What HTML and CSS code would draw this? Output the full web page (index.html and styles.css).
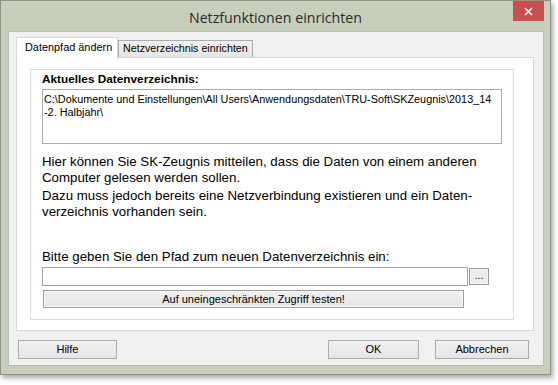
FILE: index.html
```html
<!DOCTYPE html>
<html>
<head>
<meta charset="utf-8">
<link rel="stylesheet" href="styles.css">
</head>
<body>
<div class="window">
  <div class="titlebar">
    <span class="title">Netzfunktionen einrichten</span>
    <div class="close"><svg width="9" height="9" viewBox="0 0 9 9"><path d="M1 1L8 8M8 1L1 8" stroke="#fff" stroke-width="1.6"/></svg></div>
  </div>
  <div class="client">
    <div class="tabs">
      <div class="tab active">Datenpfad ändern</div>
      <div class="tab">Netzverzeichnis einrichten</div>
    </div>
    <div class="page">
      <div class="group">
        <div class="label">Aktuelles Datenverzeichnis:</div>
        <div class="pathbox">C:\Dokumente und Einstellungen\All Users\Anwendungsdaten\TRU-Soft\SKZeugnis\2013_14<br>-2. Halbjahr\</div>
        <p class="text first">Hier können Sie SK-Zeugnis mitteilen, dass die Daten von einem anderen<br>Computer gelesen werden sollen.</p>
        <p class="text">Dazu muss jedoch bereits eine Netzverbindung existieren und ein Daten-<br>verzeichnis vorhanden sein.</p>
        <p class="text prompt">Bitte geben Sie den Pfad zum neuen Datenverzeichnis ein:</p>
        <div class="inputrow">
          <div class="input"></div>
          <div class="browse">...</div>
        </div>
        <div class="testbtn">Auf uneingeschränkten Zugriff testen!</div>
      </div>
    </div>
    <div class="buttons">
      <div class="btn help">Hilfe</div>
      <div class="spacer"></div>
      <div class="btn ok">OK</div>
      <div class="btn cancel">Abbrechen</div>
    </div>
  </div>
</div>
</body>
</html>
```

FILE: styles.css
```css
html, body {
  margin: 0;
  padding: 0;
  background: #ffffff;
}
body {
  width: 558px;
  height: 385px;
  overflow: hidden;
  font-family: "Liberation Sans", Arial, sans-serif;
}
.window {
  width: 551px;
  height: 375px;
  box-sizing: border-box;
  background: #c7cebb;
  border: 1px solid #8c9483;
  box-shadow: 2px 3px 5px rgba(0,0,0,0.35);
  display: flex;
  flex-direction: column;
  position: relative;
}
.titlebar {
  height: 30px;
  display: flex;
  align-items: center;
  justify-content: center;
}
.title {
  font-family: "Open Sans", "Noto Sans", sans-serif;
  font-size: 14.2px;
  color: #2b2b2b;
  margin-top: 3px;
}
.close {
  position: absolute;
  top: 0;
  right: 6px;
  width: 31px;
  height: 20px;
  background: #c9504f;
  display: flex;
  align-items: center;
  justify-content: center;
}
.client {
  margin: 0 6px 8px 7px;
  height: 335px;
  background: #f0f0f0;
  border: 1px solid #b7bfad;
  box-sizing: border-box;
  padding: 5px 9px 0 7px;
  display: flex;
  flex-direction: column;
}
.tabs {
  display: flex;
  align-items: flex-end;
  height: 20px;
  position: relative;
  z-index: 1;
}
.tab {
  font-size: 10.7px;
  color: #000;
  white-space: nowrap;
  box-sizing: border-box;
  border: 1px solid #acacac;
  border-bottom: none;
  background: linear-gradient(#f0f0f0, #e5e5e5);
  height: 17px;
  padding: 1px 4px 0 4px;
}
.tab.active {
  background: #ffffff;
  border-color: #d9d9d9;
  height: 21px;
  margin-bottom: -1px;
  padding: 3px 0 0 8px;
  font-size: 10.9px;
  width: 102px;
}
.page {
  height: 274px;
  box-sizing: border-box;
  border: 1px solid #d9d9d9;
  background: #ffffff;
  padding: 11px 19px 0 13px;
}
.group {
  height: 251px;
  box-sizing: border-box;
  border: 1px solid #dcdcdc;
  padding: 3px 11px 0 11px;
}
.label {
  font-size: 11.8px;
  font-weight: bold;
  color: #000;
  line-height: 13px;
}
.pathbox {
  margin-top: 3px;
  height: 55px;
  width: 460px;
  box-sizing: border-box;
  border: 1px solid #adadad;
  padding: 3px 1px;
  font-size: 10.85px;
  line-height: 13px;
  color: #000;
  white-space: nowrap;
}
.text {
  margin: 0;
  font-size: 13.3px;
  line-height: 16px;
  color: #000;
  white-space: nowrap;
}
.text.first {
  margin-top: 10px;
}
.text + .text {
  margin-top: 2px;
}
.text.prompt {
  margin-top: 29px;
}
.inputrow {
  display: flex;
  margin-top: 2px;
  height: 19px;
}
.input {
  width: 426px;
  box-sizing: border-box;
  border: 1px solid #a7a7a7;
  border-bottom-color: #7ba6d4;
  background: #fff;
}
.browse {
  margin-left: 1px;
  margin-top: 1px;
  width: 20px;
  height: 17px;
  box-sizing: border-box;
  border: 1px solid #9a9a9a;
  box-shadow: inset 0 0 0 1px #f6f6f6;
  background: #ececec;
  font-size: 10px;
  text-align: center;
  line-height: 13px;
}
.testbtn {
  margin-top: 4px;
  margin-left: 1px;
  width: 421px;
  height: 18px;
  box-sizing: border-box;
  border: 1px solid #9c9c9c;
  box-shadow: inset 0 0 0 1px #f8f8f8;
  background: linear-gradient(#f0f0f0, #e6e6e6);
  font-size: 11px;
  text-align: center;
  line-height: 16px;
}
.buttons {
  display: flex;
  margin-top: 9px;
  padding-left: 2px;
  padding-right: 5px;
}
.spacer {
  flex: 1;
}
.btn {
  height: 19px;
  box-sizing: border-box;
  border: 1px solid #acacac;
  background: linear-gradient(#f0f0f0, #e5e5e5);
  font-size: 11px;
  text-align: center;
  line-height: 17px;
}
.help { width: 99px; }
.ok { width: 91px; }
.cancel { width: 94px; margin-left: 16px; }
```
